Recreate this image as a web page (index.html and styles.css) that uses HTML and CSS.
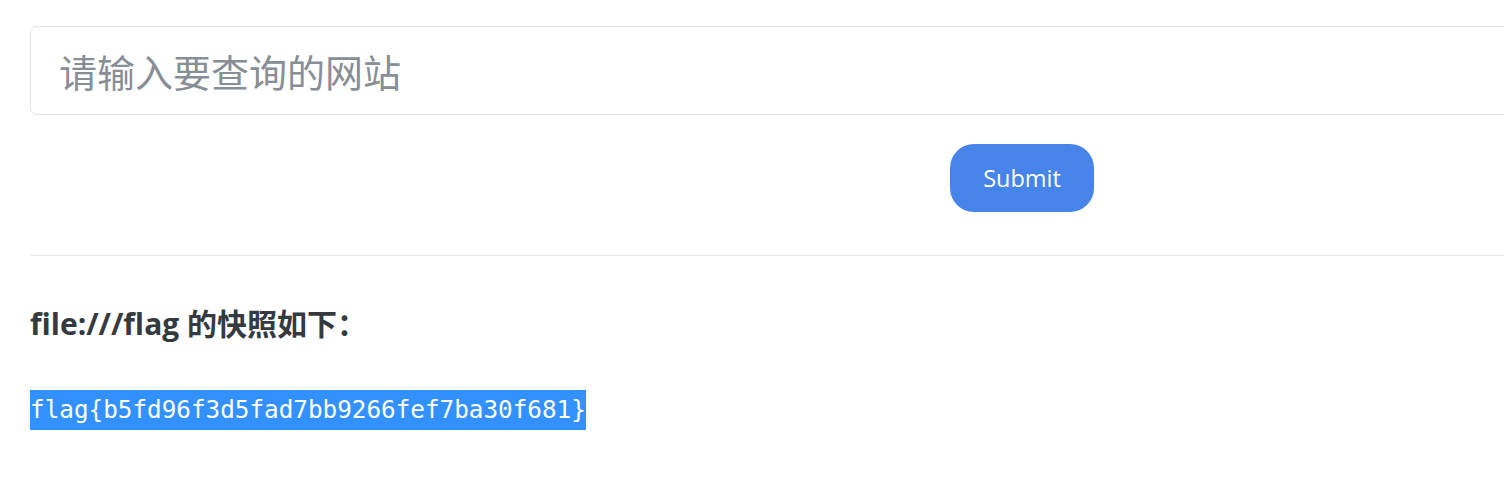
FILE: index.html
```html
<!DOCTYPE html>
<html lang="zh">
<head>
<meta charset="utf-8">
<title>快照</title>
<link rel="stylesheet" href="styles.css">
</head>
<body>
<div class="page">
  <form class="form">
    <input class="url-input" type="text" placeholder="请输入要查询的网站">
    <div class="actions">
      <button class="submit" type="button">Submit</button>
    </div>
  </form>
  <hr class="divider">
  <h3 class="title">file:///flag 的快照如下：</h3>
  <div class="result"><span class="flag">flag{b5fd96f3d5fad7bb9266fef7ba30f681}</span></div>
</div>
</body>
</html>
```
FILE: styles.css
```css
html, body {
  margin: 0;
  padding: 0;
  overflow: hidden;
  background: #fff;
}
body {
  font-family: "Open Sans", "Noto Sans CJK SC", sans-serif;
  color: #333;
}
.page {
  width: 1984px;
  margin-left: 30px;
  padding-top: 26px;
}
.form {
  display: flex;
  flex-direction: column;
  margin: 0;
}
.url-input {
  box-sizing: border-box;
  width: 100%;
  height: 89px;
  border: 1px solid #e2e2e2;
  border-radius: 7px;
  padding: 0 0 0 28px;
  font-family: "Noto Sans CJK SC", sans-serif;
  font-size: 38px;
  outline: none;
  background: #fff;
}
.url-input::placeholder {
  color: #878e95;
}
.actions {
  display: flex;
  justify-content: center;
  margin-top: 29px;
}
.submit {
  width: 144px;
  height: 68px;
  border: none;
  border-radius: 24px;
  background: #4684ea;
  color: #fff;
  font-family: "Open Sans", sans-serif;
  font-size: 23.5px;
  padding: 0;
}
.divider {
  border: none;
  border-top: 1px solid #e6e6e6;
  margin: 43px 0 0 0;
  height: 0;
}
.title {
  margin: 48px 0 0 0;
  font-size: 30px;
  line-height: 40px;
  font-weight: bold;
  color: #343a40;
  font-family: "Open Sans", "Noto Sans CJK SC", sans-serif;
}
.result {
  margin-top: 46px;
}
.flag {
  display: inline-block;
  background: #3391ff;
  color: #fff;
  font-family: "DejaVu Sans Mono", monospace;
  font-size: 24.3px;
  line-height: 40px;
  white-space: pre;
}
```
